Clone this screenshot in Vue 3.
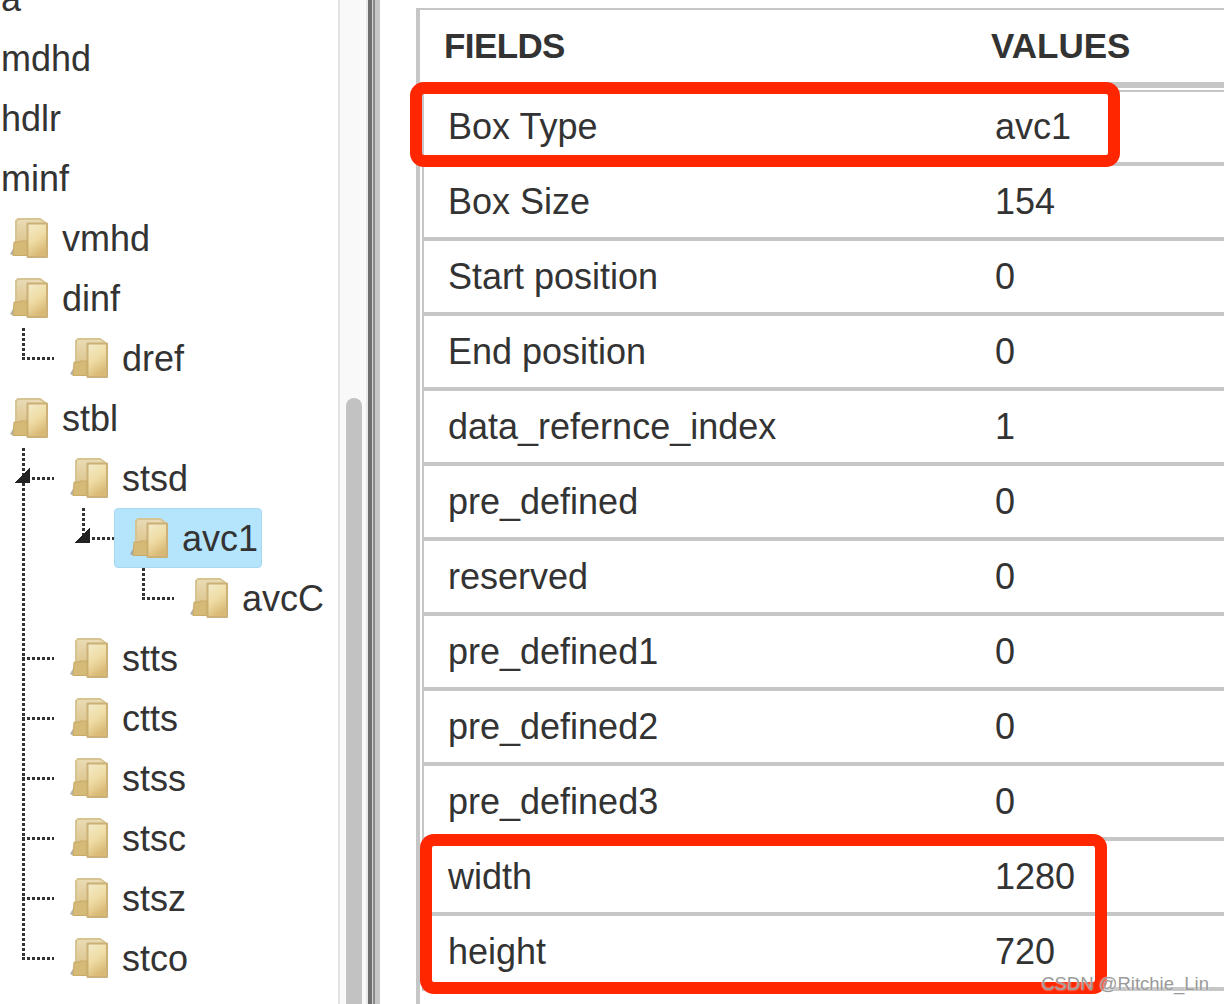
<template>
  <div class="page">
    <aside class="tree-pane">
      <div class="tree">
        <div
          v-for="node in nodes"
          :key="node.name"
          class="node"
          :style="{ paddingLeft: node.depth * 60 + 'px' }"
        >
          <span
            v-if="node.rail"
            class="wire-v full"
            style="left: 22px"
          ></span>
          <template v-if="node.depth > 0">
            <span
              class="wire-v"
              :class="{ full: node.long }"
              :style="{ left: (node.depth - 1) * 60 + 22 + 'px' }"
            ></span>
            <span class="wire-h" :style="{ left: (node.depth - 1) * 60 + 22 + 'px' }"></span>
            <span
              v-if="node.arrow"
              class="arrow"
              :style="{ left: (node.depth - 1) * 60 + 14 + 'px' }"
            ></span>
          </template>
          <span class="label" :class="{ selected: node.selected, plain: !node.icon }">
            <svg v-if="node.icon" class="folder" viewBox="0 0 38 40" aria-hidden="true">
              <defs>
                <linearGradient id="back" x1="0" y1="0" x2="0" y2="1">
                  <stop offset="0" stop-color="#e9dcb6" />
                  <stop offset="1" stop-color="#d8bb7c" />
                </linearGradient>
                <linearGradient id="front" x1="0" y1="0" x2="0.4" y2="1">
                  <stop offset="0" stop-color="#f3ebcb" />
                  <stop offset="0.55" stop-color="#efdca4" />
                  <stop offset="1" stop-color="#d9b976" />
                </linearGradient>
              </defs>
              <path d="M0 36l4-7v9z" fill="#8f8a80" opacity="0.65" />
              <path d="M8 1h22l5 3.5V36H6V3z" fill="url(#back)" stroke="#d6c592" stroke-width="2" />
              <path d="M17.5 5.5h19.5v33.5H17.5z" fill="url(#front)" stroke="#cbb077" stroke-width="2" stroke-linejoin="round" />
              <path d="M4 24h6v-1h7v14.5H3z" fill="#d5b977" stroke="#c8aa69" stroke-width="1" />
            </svg>
            <span class="name">{{ node.name }}</span>
          </span>
        </div>
      </div>
    </aside>
    <div class="scroll-track"><div class="scroll-thumb"></div></div>
    <div class="splitter"></div>
    <main class="detail">
      <div class="table-wrap">
        <div class="head-row">
          <span class="col-field">FIELDS</span>
          <span class="col-value">VALUES</span>
        </div>
        <div class="body">
          <div v-for="row in rows" :key="row[0]" class="row">
            <span class="col-field">{{ row[0] }}</span>
            <span class="col-value">{{ row[1] }}</span>
          </div>
        </div>
      </div>
      <div class="mark mark-top"></div>
      <div class="mark mark-bottom"></div>
    </main>
    <span class="watermark">CSDN @Ritchie_Lin</span>
  </div>
</template>

<script setup>
const nodes = [
  { name: 'a', depth: 0 },
  { name: 'mdhd', depth: 0 },
  { name: 'hdlr', depth: 0 },
  { name: 'minf', depth: 0 },
  { name: 'vmhd', depth: 0, icon: true },
  { name: 'dinf', depth: 0, icon: true },
  { name: 'dref', depth: 1, icon: true },
  { name: 'stbl', depth: 0, icon: true },
  { name: 'stsd', depth: 1, icon: true, long: true, arrow: true },
  { name: 'avc1', depth: 2, icon: true, arrow: true, selected: true, rail: true },
  { name: 'avcC', depth: 3, icon: true, rail: true },
  { name: 'stts', depth: 1, icon: true, long: true },
  { name: 'ctts', depth: 1, icon: true, long: true },
  { name: 'stss', depth: 1, icon: true, long: true },
  { name: 'stsc', depth: 1, icon: true, long: true },
  { name: 'stsz', depth: 1, icon: true, long: true },
  { name: 'stco', depth: 1, icon: true }
]

const rows = [
  ['Box Type', 'avc1'],
  ['Box Size', '154'],
  ['Start position', '0'],
  ['End position', '0'],
  ['data_refernce_index', '1'],
  ['pre_defined', '0'],
  ['reserved', '0'],
  ['pre_defined1', '0'],
  ['pre_defined2', '0'],
  ['pre_defined3', '0'],
  ['width', '1280'],
  ['height', '720']
]
</script>

<style>
html,
body {
  margin: 0;
  overflow: hidden;
  background: #fff;
}
</style>

<style scoped>
.page {
  position: relative;
  display: flex;
  width: 1224px;
  height: 1004px;
  overflow: hidden;
  font-family: "Liberation Sans", Arial, sans-serif;
  color: #333;
}

.tree-pane {
  width: 338px;
  height: 1004px;
  flex: none;
}

.tree {
  margin-top: -32px;
}

.node {
  position: relative;
  display: flex;
  align-items: center;
  height: 60px;
}

.label {
  position: relative;
  display: flex;
  align-items: center;
  box-sizing: border-box;
  height: 60px;
  padding-left: 10px;
  font-size: 36px;
}

.label.plain {
  padding-left: 1px;
}

.selected {
  width: 148px;
  margin-left: -6px;
  padding-left: 15px;
  background: #b5e5fd;
  border: 1px solid #a6d8f2;
  border-radius: 4px;
}

.folder {
  width: 38px;
  height: 40px;
  margin-right: 14px;
  flex: none;
  filter: blur(0.5px);
}

.name {
  padding-top: 2px;
  line-height: 1;
  color: #333;
}

.wire-v {
  position: absolute;
  top: 0;
  width: 3px;
  height: 30px;
  background: repeating-linear-gradient(to bottom, #333 0 3px, transparent 3px 5px);
}

.wire-v.full {
  height: 60px;
}

.wire-h {
  position: absolute;
  top: 29px;
  width: 32px;
  height: 3px;
  background: repeating-linear-gradient(to right, #333 0 3px, transparent 3px 5px);
}

.arrow {
  position: absolute;
  top: 20px;
  width: 16px;
  height: 15px;
  background: linear-gradient(to bottom right, transparent 50%, #222 50%);
}

.scroll-track {
  box-sizing: border-box;
  width: 30px;
  flex: none;
  display: flex;
  align-items: flex-end;
  padding-left: 6px;
  background: #f9f9f9;
  border-left: 2px solid #e3e3e3;
  border-right: 2px solid #e8e8e8;
}

.scroll-thumb {
  width: 16px;
  height: 606px;
  border-radius: 8px 8px 0 0;
  background: #c2c2c2;
}

.splitter {
  width: 12px;
  flex: none;
  background: linear-gradient(
    to right,
    #6f6f6f 0 4px,
    #d4d4d4 4px 5px,
    #8a8a8a 5px 7px,
    #c6c6c6 7px 12px
  );
}

.detail {
  position: relative;
  flex: 1;
  min-width: 0;
  padding: 8px 0 0 36px;
}

.table-wrap {
  border-top: 2px solid #c6c6c6;
  border-left: 4px solid #c6c6c6;
  height: 1000px;
}

.head-row {
  display: flex;
  align-items: center;
  height: 72px;
  font-size: 35px;
  font-weight: 700;
  border-bottom: 6px solid #c6c6c6;
  padding-left: 24px;
}

.head-row .col-field {
  width: 547px;
  letter-spacing: -0.6px;
}

.body {
  margin-top: 2px;
  margin-left: 2px;
  border-top: 2px solid #c6c6c6;
  border-left: 2px solid #c6c6c6;
}

.row {
  display: flex;
  align-items: center;
  box-sizing: border-box;
  height: 75px;
  padding-left: 24px;
  font-size: 36px;
  border-bottom: 4px solid #c6c6c6;
}

.row:first-child {
  height: 74px;
}

.row .col-field {
  width: 547px;
}

.mark {
  position: absolute;
  box-sizing: border-box;
  border: 12px solid #ff2600;
  border-radius: 14px;
}

.mark-top {
  left: 30px;
  top: 82px;
  width: 710px;
  height: 85px;
}

.mark-bottom {
  left: 40px;
  top: 834px;
  width: 687px;
  height: 160px;
}

.watermark {
  position: absolute;
  right: 15px;
  bottom: 9px;
  font-size: 18.5px;
  color: #9a9a9a;
  text-shadow: 0 0 2px #fff;
}
</style>
